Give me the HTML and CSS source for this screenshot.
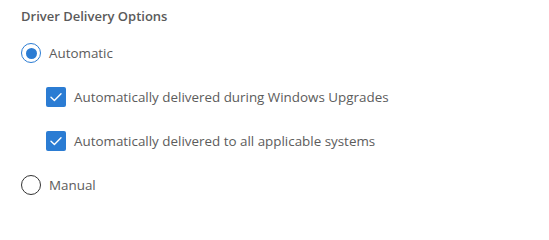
FILE: index.html
```html
<!DOCTYPE html>
<html>
<head>
<meta charset="utf-8">
<link rel="stylesheet" href="styles.css">
</head>
<body>
<div class="panel">
  <div class="title">Driver Delivery Options</div>
  <div class="options">
    <label class="row">
      <span class="radio checked"><span class="dot"></span></span>
      <span class="label">Automatic</span>
    </label>
    <label class="row sub">
      <span class="checkbox">
        <svg viewBox="0 0 20 20" width="20" height="20"><path d="M5 10.2 L8.4 13.5 L15 6.8" fill="none" stroke="#fff" stroke-width="1.4" stroke-linecap="round" stroke-linejoin="round"/></svg>
      </span>
      <span class="label">Automatically delivered during Windows Upgrades</span>
    </label>
    <label class="row sub">
      <span class="checkbox">
        <svg viewBox="0 0 20 20" width="20" height="20"><path d="M5 10.2 L8.4 13.5 L15 6.8" fill="none" stroke="#fff" stroke-width="1.4" stroke-linecap="round" stroke-linejoin="round"/></svg>
      </span>
      <span class="label">Automatically delivered to all applicable systems</span>
    </label>
    <label class="row">
      <span class="radio"></span>
      <span class="label">Manual</span>
    </label>
  </div>
</div>
</body>
</html>
```
FILE: styles.css
```css
html, body {
  margin: 0;
  background: #fff;
}
.panel {
  padding: 6px 0 0 21px;
  font-family: "Open Sans", "Noto Sans", sans-serif;
  color: #555;
}
.title {
  font-size: 13px;
  font-weight: 600;
  line-height: 20px;
  color: #5a5a5a;
}
.options {
  display: flex;
  flex-direction: column;
  gap: 24px;
  margin-top: 17px;
}
.row {
  display: flex;
  align-items: center;
  gap: 8px;
  height: 20px;
}
.row.sub {
  padding-left: 25px;
}
.radio {
  box-sizing: border-box;
  width: 20px;
  height: 20px;
  border-radius: 50%;
  border: 1px solid #333;
  display: flex;
  align-items: center;
  justify-content: center;
  flex: none;
}
.radio.checked {
  border-color: #2b7cd3;
}
.dot {
  width: 11px;
  height: 11px;
  border-radius: 50%;
  background: #2b7cd3;
}
.checkbox {
  width: 20px;
  height: 20px;
  border-radius: 2px;
  background: #2b7cd3;
  display: flex;
  flex: none;
}
.label {
  font-size: 13.4px;
  color: #5c5c5c;
  line-height: 20px;
}
```
